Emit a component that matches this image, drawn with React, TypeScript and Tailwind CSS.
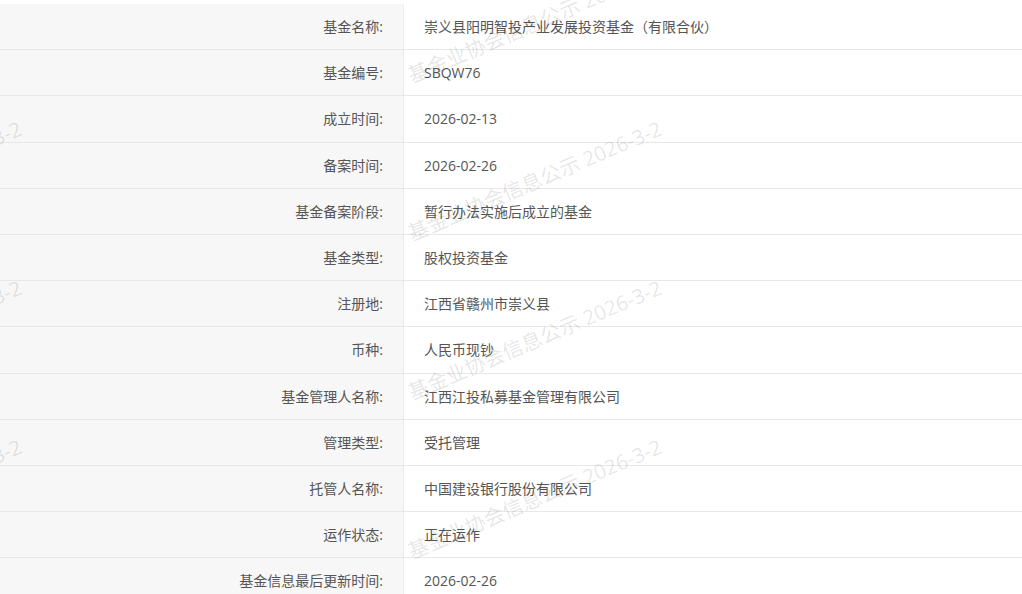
import React from "react";

const rows: [string, string][] = [
  ["基金名称:", "崇义县阳明智投产业发展投资基金（有限合伙）"],
  ["基金编号:", "SBQW76"],
  ["成立时间:", "2026-02-13"],
  ["备案时间:", "2026-02-26"],
  ["基金备案阶段:", "暂行办法实施后成立的基金"],
  ["基金类型:", "股权投资基金"],
  ["注册地:", "江西省赣州市崇义县"],
  ["币种:", "人民币现钞"],
  ["基金管理人名称:", "江西江投私募基金管理有限公司"],
  ["管理类型:", "受托管理"],
  ["托管人名称:", "中国建设银行股份有限公司"],
  ["运作状态:", "正在运作"],
  ["基金信息最后更新时间:", "2026-02-26"],
];

// watermark start points (bottom-left of text)
const marks: [number, number][] = [];
for (const x of [413, -227]) {
  for (const y of [82, 240, 399, 558]) marks.push([x, y]);
}

export default function App() {
  return (
    <div
      className="relative w-full h-[594px] overflow-hidden bg-white text-[14px] text-[#555]"
      style={{ fontFamily: '"Open Sans", "Noto Sans CJK SC", sans-serif' }}
    >
      <div className="mt-[4px] flex flex-col">
        {rows.map(([label, value]) => (
          <div key={label} className="flex h-[46.2px] border-b border-[#e8e8e8]">
            <div className="w-[404px] shrink-0 flex items-center justify-end pr-5 bg-[#f7f7f7] border-r border-[#ececec]">
              {label}
            </div>
            <div className="flex-1 flex items-center pl-5">{value}</div>
          </div>
        ))}
      </div>

      <div className="absolute inset-0 pointer-events-none">
        {marks.map(([x, y]) => (
          <span
            key={`${x}-${y}`}
            className="absolute whitespace-nowrap text-[20.5px] leading-none text-black/[0.11] origin-bottom-left -rotate-[23deg]"
            style={{ left: x, top: y - 17 }}
          >
            基金业协会信息公示 2026-3-2
          </span>
        ))}
      </div>
    </div>
  );
}
